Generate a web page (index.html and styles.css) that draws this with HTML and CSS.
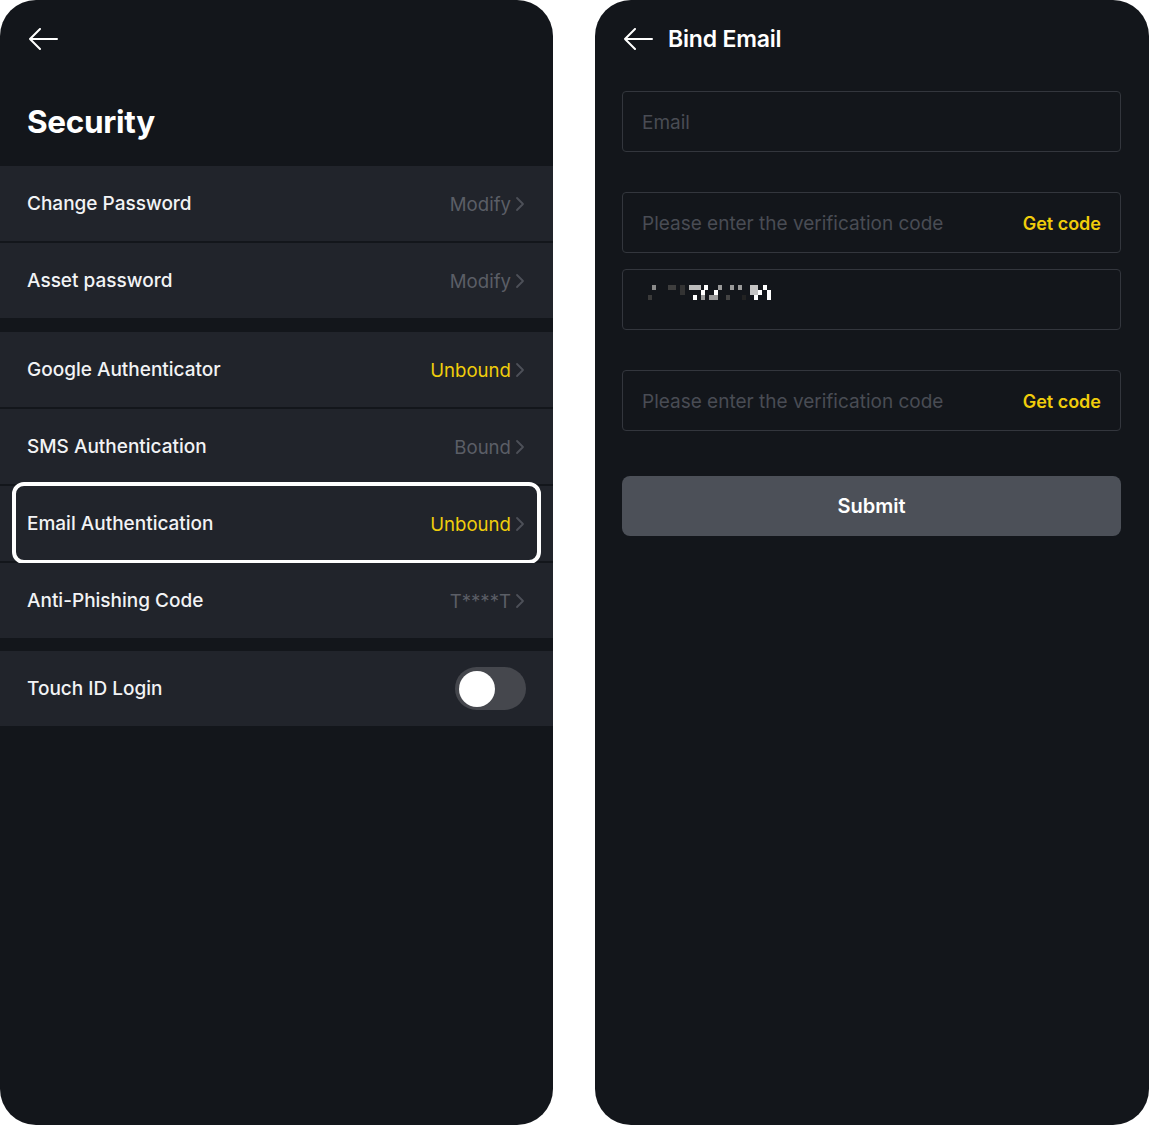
FILE: index.html
```html
<!DOCTYPE html>
<html lang="en">
<head>
  <meta charset="UTF-8" />
  <meta name="viewport" content="width=device-width, initial-scale=1.0" />
  <title>Security - Bind Email</title>
  <link rel="stylesheet" href="styles.css">
</head>
<body>
  <div class="phone">
    <div class="top-bar">
      <svg class="back" width="30" height="22" viewBox="0 0 30 22"><path d="M29 11H2M12 1L2 11l10 10" fill="none" stroke="#fff" stroke-width="2" stroke-linecap="round" stroke-linejoin="round"/></svg>
    </div>
    <h1 class="page-title">Security</h1>

    <div class="group">
      <div class="row">
        <span class="label">Change Password</span>
        <span class="value">Modify<svg class="chev" width="10" height="16" viewBox="0 0 10 16"><path d="M2 2l6 6-6 6" fill="none" stroke="#4d5058" stroke-width="1.8" stroke-linecap="round" stroke-linejoin="round"/></svg></span>
      </div>
      <div class="row">
        <span class="label">Asset password</span>
        <span class="value">Modify<svg class="chev" width="10" height="16" viewBox="0 0 10 16"><path d="M2 2l6 6-6 6" fill="none" stroke="#4d5058" stroke-width="1.8" stroke-linecap="round" stroke-linejoin="round"/></svg></span>
      </div>
    </div>

    <div class="group second">
      <div class="row">
        <span class="label">Google Authenticator</span>
        <span class="value warn">Unbound<svg class="chev" width="10" height="16" viewBox="0 0 10 16"><path d="M2 2l6 6-6 6" fill="none" stroke="#4d5058" stroke-width="1.8" stroke-linecap="round" stroke-linejoin="round"/></svg></span>
      </div>
      <div class="row">
        <span class="label">SMS Authentication</span>
        <span class="value">Bound<svg class="chev" width="10" height="16" viewBox="0 0 10 16"><path d="M2 2l6 6-6 6" fill="none" stroke="#4d5058" stroke-width="1.8" stroke-linecap="round" stroke-linejoin="round"/></svg></span>
      </div>
      <div class="row focus">
        <span class="label">Email Authentication</span>
        <span class="value warn">Unbound<svg class="chev" width="10" height="16" viewBox="0 0 10 16"><path d="M2 2l6 6-6 6" fill="none" stroke="#4d5058" stroke-width="1.8" stroke-linecap="round" stroke-linejoin="round"/></svg></span>
      </div>
      <div class="row">
        <span class="label">Anti-Phishing Code</span>
        <span class="value">T****T<svg class="chev" width="10" height="16" viewBox="0 0 10 16"><path d="M2 2l6 6-6 6" fill="none" stroke="#4d5058" stroke-width="1.8" stroke-linecap="round" stroke-linejoin="round"/></svg></span>
      </div>
    </div>

    <div class="group third">
      <div class="row">
        <span class="label">Touch ID Login</span>
        <span class="switch"><span class="knob"></span></span>
      </div>
    </div>
  </div>

  <div class="phone">
    <div class="top-bar">
      <svg class="back" width="30" height="22" viewBox="0 0 30 22"><path d="M29 11H2M12 1L2 11l10 10" fill="none" stroke="#fff" stroke-width="2" stroke-linecap="round" stroke-linejoin="round"/></svg>
      <span class="bar-title">Bind Email</span>
    </div>

    <div class="form">
      <div class="field first"><input type="text" placeholder="Email" /></div>
      <div class="field wide">
        <input type="text" placeholder="Please enter the verification code" />
        <span class="get-code">Get code</span>
      </div>
      <div class="field captcha">
        <svg width="126" height="18" viewBox="0 0 126 18">
          <rect x="5" y="1" width="4" height="5" fill="#8a8a8a"/>
          <rect x="1" y="11" width="4" height="5" fill="#3a3a3a"/>
          <rect x="21" y="1" width="8" height="5" fill="#3e3e3e"/>
          <rect x="33" y="1" width="5" height="10" fill="#333"/>
          <rect x="42" y="1" width="12" height="5" fill="#bcbcbc"/>
          <rect x="57" y="1" width="4" height="5" fill="#fff"/>
          <rect x="54" y="6" width="4" height="5" fill="#fff"/>
          <rect x="46" y="11" width="4" height="5" fill="#fff"/>
          <rect x="54" y="11" width="4" height="5" fill="#9a9a9a"/>
          <rect x="62" y="11" width="9" height="5" fill="#9a9a9a"/>
          <rect x="67" y="6" width="4" height="5" fill="#fff"/>
          <rect x="71" y="1" width="4" height="5" fill="#9a9a9a"/>
          <rect x="79" y="11" width="4" height="5" fill="#444"/>
          <rect x="83" y="1" width="4" height="5" fill="#9a9a9a"/>
          <rect x="91" y="1" width="4" height="5" fill="#9a9a9a"/>
          <rect x="95" y="11" width="4" height="5" fill="#222"/>
          <rect x="103" y="1" width="8" height="10" fill="#c4c4c4"/>
          <rect x="107" y="11" width="4" height="5" fill="#fff"/>
          <rect x="111" y="6" width="4" height="5" fill="#fff"/>
          <rect x="116" y="1" width="4" height="5" fill="#fff"/>
          <rect x="120" y="6" width="4" height="10" fill="#fff"/>
        </svg>
      </div>
      <div class="field wide">
        <input type="text" placeholder="Please enter the verification code" />
        <span class="get-code">Get code</span>
      </div>
      <button class="submit">Submit</button>
    </div>
  </div>
</body>
</html>
```

FILE: styles.css
```css
body {
  margin: 0;
  background: #fff;
  font-family: Inter, "Noto Sans", sans-serif;
  display: flex;
  gap: 42px;
  color: #fff;
}
.phone {
  width: 553px;
  height: 1125px;
  flex-shrink: 0;
  background: #13161b;
  border-radius: 36px;
  overflow: hidden;
}
.phone + .phone {
  width: 554px;
}
.top-bar {
  height: 78px;
  padding-left: 28px;
  display: flex;
  align-items: center;
  gap: 15px;
}
.bar-title {
  font-size: 23px;
  font-weight: 600;
  letter-spacing: -0.2px;
}
.page-title {
  margin: 0;
  height: 88px;
  line-height: 88px;
  padding-left: 27px;
  font-size: 31.5px;
  font-weight: 700;
  letter-spacing: -0.3px;
  box-sizing: border-box;
}
.group {
  display: flex;
  flex-direction: column;
  gap: 2px;
}
.group.second {
  margin-top: 14px;
}
.group.third {
  margin-top: 13px;
}
.row {
  position: relative;
  height: 75px;
  background: #21242b;
  display: flex;
  align-items: center;
  justify-content: space-between;
  padding: 0 27px;
}
.row.focus::after {
  content: "";
  position: absolute;
  left: 12px;
  right: 12px;
  top: -4px;
  bottom: -3px;
  border: 4px solid #fff;
  border-radius: 12px;
}
.label {
  font-size: 19px;
  font-weight: 500;
  color: #f2f3f5;
}
.value {
  font-size: 18.6px;
  color: #5b5e66;
  display: flex;
  align-items: center;
  gap: 4px;
  margin-right: 1px;
}
.value.warn {
  color: #f0cd0b;
}
.switch {
  width: 71px;
  height: 43px;
  border-radius: 22px;
  background: #45474d;
  display: flex;
  align-items: center;
  padding-left: 4px;
  box-sizing: border-box;
}
.knob {
  width: 36px;
  height: 36px;
  border-radius: 50%;
  background: #fff;
}
.form {
  padding: 13px 28px 0 27px;
  display: flex;
  flex-direction: column;
}
.field {
  height: 61px;
  border: 1px solid #33363d;
  border-radius: 4px;
  box-sizing: border-box;
  display: flex;
  align-items: center;
  padding: 1px 19px 0;
  margin-top: 40px;
}
.field.first {
  margin-top: 0;
}
.field.captcha {
  margin-top: 16px;
  align-items: flex-start;
  padding-top: 14px;
  padding-left: 24px;
}
.field input {
  flex: 1;
  background: none;
  border: none;
  outline: none;
  font-family: inherit;
  font-size: 19px;
  color: #fff;
  padding: 0;
}
.field input::placeholder {
  color: #494c54;
}
.get-code {
  font-size: 18px;
  font-weight: 600;
  color: #f0cd0b;
}
.submit {
  margin-top: 45px;
  height: 60px;
  border: none;
  border-radius: 8px;
  background: #4c5058;
  color: #fff;
  font-family: inherit;
  font-size: 20px;
  font-weight: 600;
  padding-top: 1px;
  cursor: pointer;
}
```
